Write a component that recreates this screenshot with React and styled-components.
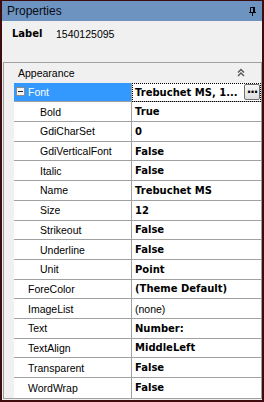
import React from "react"
import styled, { createGlobalStyle } from "styled-components"

const GlobalStyle = createGlobalStyle`
  html, body {
    margin: 0;
    padding: 0;
    background: #f0f0f0;
  }
  body {
    font-family: "Liberation Sans", Arial, sans-serif;
  }
`

const ROW_H = "19.7px"
const LINE = "#a0a0a0"

const properties = [
  { name: "Font", value: "Trebuchet MS, 1...", bold: true, expander: true, selected: true },
  { name: "Bold", value: "True", bold: true, sub: true },
  { name: "GdiCharSet", value: "0", bold: true, sub: true },
  { name: "GdiVerticalFont", value: "False", bold: true, sub: true },
  { name: "Italic", value: "False", bold: true, sub: true },
  { name: "Name", value: "Trebuchet MS", bold: true, sub: true },
  { name: "Size", value: "12", bold: true, sub: true },
  { name: "Strikeout", value: "False", bold: true, sub: true },
  { name: "Underline", value: "False", bold: true, sub: true },
  { name: "Unit", value: "Point", bold: true, sub: true },
  { name: "ForeColor", value: "(Theme Default)", bold: true },
  { name: "ImageList", value: "(none)" },
  { name: "Text", value: "Number:", bold: true },
  { name: "TextAlign", value: "MiddleLeft", bold: true },
  { name: "Transparent", value: "False", bold: true },
  { name: "WordWrap", value: "False", bold: true },
]

const PinIcon = () => (
  <svg width="7" height="9" viewBox="0 0 7 9">
    <path d="M1.5 0.5H4.5V5.5H1.5Z" fill="none" stroke="#000" />
    <rect x="4" y="0" width="2" height="6" fill="#000" />
    <rect x="0" y="5" width="7" height="1" fill="#000" />
    <rect x="3" y="6" width="1" height="3" fill="#000" />
  </svg>
)

const CollapseIcon = () => (
  <svg width="8" height="9" viewBox="0 0 8 9">
    <path d="M1 4.5L4 1.5L7 4.5" fill="none" stroke="#555" strokeWidth="1.4" />
    <path d="M1 8L4 5L7 8" fill="none" stroke="#555" strokeWidth="1.4" />
  </svg>
)

const MinusBox = () => (
  <svg width="9" height="9" viewBox="0 0 9 9">
    <rect x="0.5" y="0.5" width="8" height="8" fill="#f4f4f4" stroke="#8c8c8c" />
    <rect x="2" y="4" width="5" height="1" fill="#222" />
  </svg>
)

const App = () => {
  return (
    <>
      <GlobalStyle />
      <Frame>
        <TitleBar>
          <span>Properties</span>
          <PinIcon />
        </TitleBar>
        <Info>
          <InfoKey>Label</InfoKey>
          <span>1540125095</span>
        </Info>
        <Grid>
          <Category>
            <span>Appearance</span>
            <CollapseIcon />
          </Category>
          {properties.map((p, i) => (
            <Row key={p.name} last={i === properties.length - 1}>
              <Margin />
              <NameCell sub={p.sub} selected={p.selected}>
                {p.expander && (
                  <Expander>
                    <MinusBox />
                  </Expander>
                )}
                {p.name}
              </NameCell>
              <ValueCell bold={p.bold} focused={p.selected}>
                <span>{p.value}</span>
                {p.selected && <DotsButton>···</DotsButton>}
              </ValueCell>
            </Row>
          ))}
        </Grid>
      </Frame>
    </>
  )
}

export default App

const Frame = styled.div`
  width: 264px;
  height: 402px;
  box-sizing: border-box;
  border: 2px solid #3e0c0c;
  border-top-width: 1px;
  background: #f0f0f0;
  display: flex;
  flex-direction: column;
  color: #000;
`

const TitleBar = styled.div`
  height: 20px;
  flex: none;
  background: #6d94c1;
  display: flex;
  align-items: center;
  justify-content: space-between;
  padding: 0 6px 0 5px;
  font-size: 12px;
  color: #0a0a14;

  svg {
    margin-top: 1px;
  }
`

const Info = styled.div`
  height: 41px;
  flex: none;
  display: flex;
  align-items: flex-start;
  padding: 7px 0 0 10px;
  box-sizing: border-box;
  font-size: 10.5px;
  line-height: 12px;
`

const InfoKey = styled.span`
  font-family: "DejaVu Sans", sans-serif;
  font-weight: bold;
  font-size: 10px;
  width: 44px;
`

const Grid = styled.div`
  height: 337px;
  box-sizing: border-box;
  margin: 0 0 1px 1px;
  border: 1px solid ${LINE};
  background: #fff;
  display: flex;
  flex-direction: column;
  overflow: hidden;
  font-size: 10.5px;
`

const Category = styled.div`
  height: ${ROW_H};
  flex: none;
  background: #f0f0f0;
  display: flex;
  align-items: center;
  justify-content: space-between;
  padding: 0 16px 0 14px;
`

const Row = styled.div`
  height: ${ROW_H};
  flex: none;
  display: flex;
  box-sizing: border-box;

  & > div:not(:first-child) {
    border-bottom: ${({ last }) => (last ? "none" : `1px solid ${LINE}`)};
  }
`

const Margin = styled.div`
  width: 10px;
  flex: none;
  background: #f0f0f0;
`

const NameCell = styled.div`
  width: 118px;
  flex: none;
  box-sizing: border-box;
  display: flex;
  align-items: center;
  padding-left: ${({ sub }) => (sub ? "26px" : "14px")};
  border-right: 1px solid ${LINE};
  background: ${({ selected }) => (selected ? "#3399ff" : "transparent")};
  color: ${({ selected }) => (selected ? "#fff" : "#000")};
  position: relative;
`

const Expander = styled.span`
  position: absolute;
  left: 2px;
  top: 50%;
  margin-top: -5px;
  display: flex;
`

const ValueCell = styled.div`
  flex: 1;
  min-width: 0;
  box-sizing: border-box;
  display: flex;
  align-items: center;
  justify-content: space-between;
  padding: 0 1px 0 3px;
  white-space: nowrap;
  font-family: ${({ bold }) => (bold ? '"DejaVu Sans", sans-serif' : "inherit")};
  font-weight: ${({ bold }) => (bold ? "bold" : "normal")};
  font-size: ${({ bold }) => (bold ? "10px" : "inherit")};
  outline: ${({ focused }) => (focused ? "1px dotted #000" : "none")};
  outline-offset: -1px;
`

const DotsButton = styled.span`
  width: 16px;
  height: 16px;
  box-sizing: border-box;
  border: 1px solid #707070;
  border-radius: 2px;
  background: linear-gradient(#f6f6f6, #dedede);
  display: flex;
  align-items: center;
  justify-content: center;
  font-size: 12px;
  line-height: 1;
  letter-spacing: -1px;
  padding-bottom: 1px;
`
